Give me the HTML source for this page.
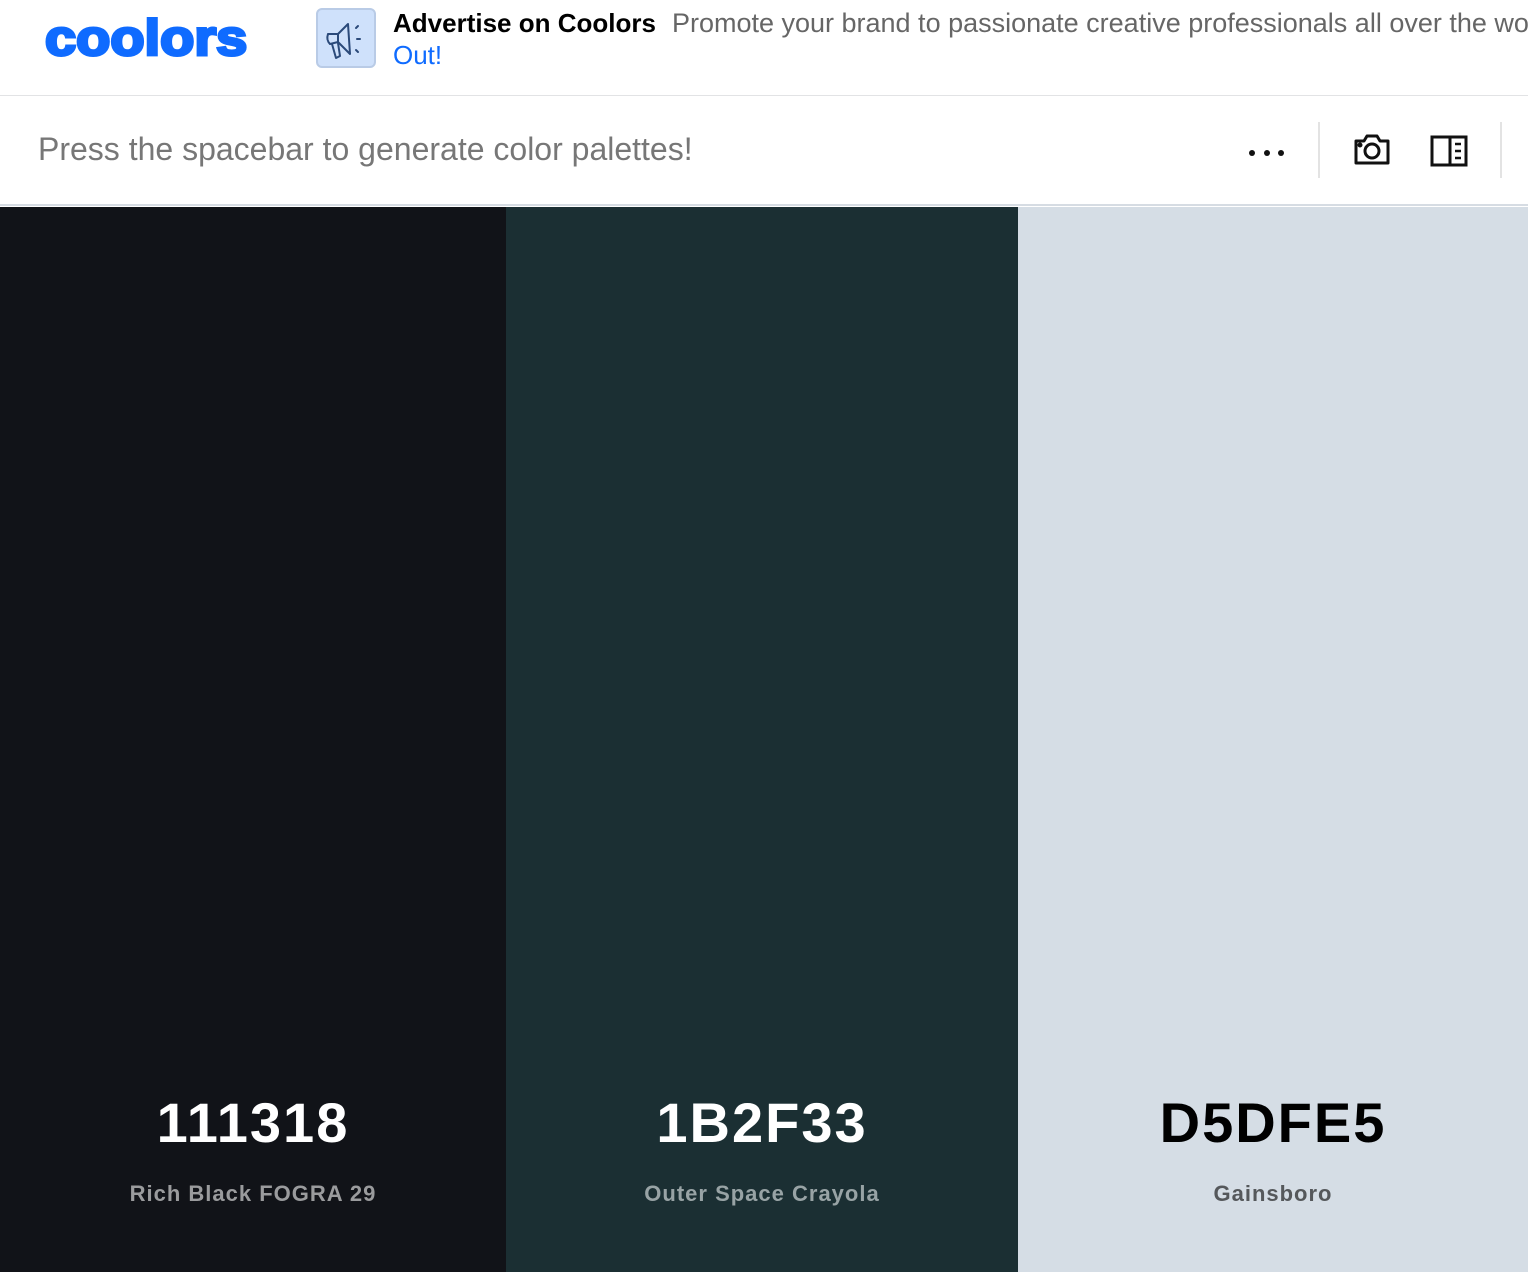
<!DOCTYPE html>
<html><head><meta charset="utf-8"><style>
*{margin:0;padding:0;box-sizing:border-box}
body{width:1528px;height:1272px;overflow:hidden;font-family:"Liberation Sans",Arial,sans-serif;background:#fff;position:relative}
.hdr{position:absolute;left:0;top:0;width:1528px;height:96px;border-bottom:1px solid #e2e3e5;background:#fff;overflow:hidden}
.logo{position:absolute;left:45px;top:8px;font-size:50px;font-weight:bold;color:#0f6bff;letter-spacing:0;transform:scaleX(1.12);transform-origin:left top;line-height:60px;-webkit-text-stroke:3px #0f6bff}
.ad{position:absolute;left:316px;top:8px;width:60px;height:60px;background:#cfe1fb;border:2px solid #b9cbe6;border-radius:6px}
.adt{position:absolute;left:393px;top:8px;white-space:nowrap;line-height:30px}
.adt b{color:#000;font-weight:bold;margin-right:16px;font-size:26px}
.adt span{color:#666;font-size:27px}
.out{position:absolute;left:393px;top:40px;font-size:26px;color:#0f6bff;line-height:30px}
.bar{position:absolute;left:0;top:96px;width:1528px;height:110px;border-bottom:2px solid #d6dce3;background:#fff}
.msg{position:absolute;left:38px;top:35px;font-size:32px;color:#777}
.sep{position:absolute;top:26px;width:2px;height:56px;background:#e3e3e3}
.col{position:absolute;top:207px;height:1065px;text-align:center}
.hex{position:absolute;left:0;right:0;top:883px;font-size:56px;font-weight:bold;letter-spacing:2px}
.nm{position:absolute;left:0;right:0;top:974px;font-size:22px;font-weight:bold;letter-spacing:1px}
</style></head><body>
<div class="hdr">
<div class="logo">coolors</div>
<div class="ad"><svg width="56" height="56" viewBox="0 0 56 56" fill="none" stroke="#2b4a7a" stroke-width="2" stroke-linejoin="round" stroke-linecap="round"><path d="M10 24 Q8 30 12 34 L20 32 L20 24 Z"/><path d="M20 24 L30 14 L32 44 L20 32"/><path d="M14 34 L18 48 L22 46 L20 33"/><path d="M38 18 l2 -2 M39 29 h3 M38 40 l2 2"/></svg></div>
<div class="adt"><b>Advertise on Coolors</b><span>Promote your brand to passionate creative professionals all over the world</span></div>
<div class="out">Out!</div>
</div>
<div class="bar">
<div class="msg">Press the spacebar to generate color palettes!</div>
<svg style="position:absolute;left:1248px;top:50px" width="38" height="14"><circle cx="4" cy="7" r="3" fill="#111"/><circle cx="19" cy="7" r="3" fill="#111"/><circle cx="33" cy="7" r="3" fill="#111"/></svg>
<div class="sep" style="left:1318px"></div>
<svg style="position:absolute;left:1352px;top:36px" width="40" height="36" viewBox="0 0 40 36" fill="none" stroke="#111" stroke-width="3" stroke-linejoin="round"><path d="M4 9 h8 l3 -5 h10 l3 5 h8 v22 h-32 z"/><circle cx="20" cy="19" r="7"/><circle cx="8" cy="13" r="1" fill="#111"/></svg>
<svg style="position:absolute;left:1430px;top:39px" width="38" height="32" viewBox="0 0 38 32" fill="none" stroke="#111" stroke-width="3"><rect x="2" y="2" width="34" height="28"/><path d="M20 2 v28"/><path d="M25 9 h6 M25 16 h6 M25 23 h6" stroke-width="2.5"/></svg>
<div class="sep" style="left:1500px"></div>
</div>
<div class="col" style="left:0;width:506px;background:#111318"><div class="hex" style="color:#fff">111318</div><div class="nm" style="color:#9a9b9d">Rich Black FOGRA 29</div></div>
<div class="col" style="left:506px;width:512px;background:#1b2f33"><div class="hex" style="color:#fff">1B2F33</div><div class="nm" style="color:#98a3a5">Outer Space Crayola</div></div>
<div class="col" style="left:1018px;width:510px;background:#d5dde5"><div class="hex" style="color:#000">D5DFE5</div><div class="nm" style="color:#55585b">Gainsboro</div></div>
</body></html>
